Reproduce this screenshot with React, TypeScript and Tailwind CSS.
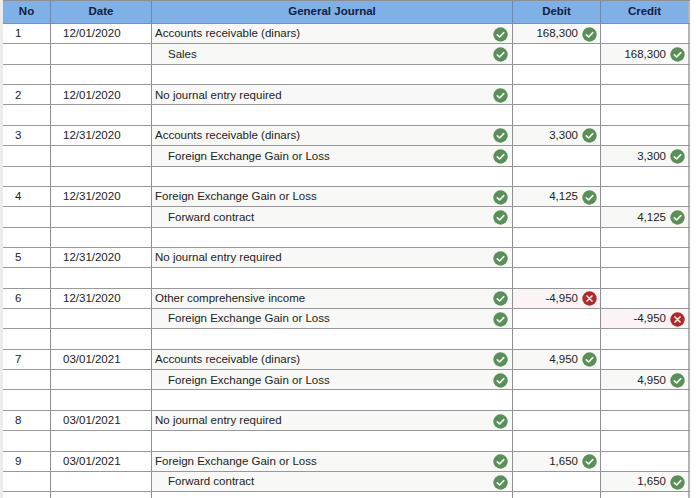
const CHECK = "check";
const CROSS = "cross";

function Mark({ kind }: { kind: string }) {
  if (kind === CROSS) {
    return (
      <svg width="15" height="15" viewBox="0 0 15 15" className="shrink-0">
        <circle cx="7.5" cy="7.5" r="7.2" fill="#ab2a2e" />
        <path d="M5 5l5 5M10 5l-5 5" stroke="#f8e4e4" strokeWidth="1.7" strokeLinecap="round" />
      </svg>
    );
  }
  return (
    <svg width="15" height="15" viewBox="0 0 15 15" className="shrink-0">
      <circle cx="7.5" cy="7.5" r="7.2" fill="#5a8f5a" />
      <path d="M4.3 7.8l2.3 2.2 4.2-4.4" stroke="#f2f7f2" strokeWidth="1.6" fill="none" strokeLinecap="round" strokeLinejoin="round" />
    </svg>
  );
}

type Row = {
  no?: string;
  date?: string;
  acct?: string;
  indent?: boolean;
  debit?: string;
  credit?: string;
  bad?: boolean;
};

const rows: Row[] = [
  { no: "1", date: "12/01/2020", acct: "Accounts receivable (dinars)", debit: "168,300" },
  { acct: "Sales", indent: true, credit: "168,300" },
  {},
  { no: "2", date: "12/01/2020", acct: "No journal entry required" },
  {},
  { no: "3", date: "12/31/2020", acct: "Accounts receivable (dinars)", debit: "3,300" },
  { acct: "Foreign Exchange Gain or Loss", indent: true, credit: "3,300" },
  {},
  { no: "4", date: "12/31/2020", acct: "Foreign Exchange Gain or Loss", debit: "4,125" },
  { acct: "Forward contract", indent: true, credit: "4,125" },
  {},
  { no: "5", date: "12/31/2020", acct: "No journal entry required" },
  {},
  { no: "6", date: "12/31/2020", acct: "Other comprehensive income", debit: "-4,950", bad: true },
  { acct: "Foreign Exchange Gain or Loss", indent: true, credit: "-4,950", bad: true },
  {},
  { no: "7", date: "03/01/2021", acct: "Accounts receivable (dinars)", debit: "4,950" },
  { acct: "Foreign Exchange Gain or Loss", indent: true, credit: "4,950" },
  {},
  { no: "8", date: "03/01/2021", acct: "No journal entry required" },
  {},
  { no: "9", date: "03/01/2021", acct: "Foreign Exchange Gain or Loss", debit: "1,650" },
  { acct: "Forward contract", indent: true, credit: "1,650" },
  {},
];

function Amount({ value, bad, last }: { value?: string; bad?: boolean; last?: boolean }) {
  const bg = !value ? "bg-white" : bad ? "bg-[#fcf3f4]" : "bg-[#f8f9f6]";
  const edge = last ? "border-r-2 border-[#b4b4b6]" : "border-r border-[#8f8f93]";
  return (
    <div className={`${bg} ${edge} flex items-center justify-end gap-[4px] pr-[3px] pt-px min-w-0`}>
      {value && (
        <>
          <span>{value}</span>
          <Mark kind={bad ? CROSS : CHECK} />
        </>
      )}
    </div>
  );
}

export default function App() {
  return (
    <div className="w-[700px] h-[498px] overflow-hidden bg-white font-['Liberation_Sans',Arial,sans-serif] text-[11.5px] text-[#222]">
      <div className="w-[690px] border-l-[3px] border-[#ececec]">
        <div className="grid grid-cols-[48px_101px_361px_88px_89px] h-[24px] bg-[#7fb0e6] border-b border-[#7f8f9f] border-t border-t-[#8f8f93] font-bold text-[#10213f] text-center leading-[21px]">
          <div className="border-r border-[#6a8db5]">No</div>
          <div className="border-r border-[#6a8db5]">Date</div>
          <div className="border-r border-[#6a8db5]">General Journal</div>
          <div className="border-r border-[#6a8db5]">Debit</div>
          <div className="border-r-2 border-[#b4b4b6]">Credit</div>
        </div>
        {rows.map((r, i) => (
          <div key={i} className="grid grid-cols-[48px_101px_361px_88px_89px] h-[20.37px] border-b border-[#98989b] leading-none">
            <div className="border-r border-[#8f8f93] pl-[12px] pt-px flex items-center">{r.no}</div>
            <div className="border-r border-[#8f8f93] pl-[12px] pt-px flex items-center">{r.date}</div>
            <div className={`${r.acct ? "bg-[#f8f9f6]" : "bg-white"} border-r border-[#8f8f93] flex items-center justify-between pr-[4px] pt-px ${r.indent ? "pl-[16px]" : "pl-[3px]"}`}>
              <span>{r.acct}</span>
              {r.acct && <Mark kind={CHECK} />}
            </div>
            <Amount value={r.debit} bad={r.bad} />
            <Amount value={r.credit} bad={r.bad} last />
          </div>
        ))}
      </div>
    </div>
  );
}
